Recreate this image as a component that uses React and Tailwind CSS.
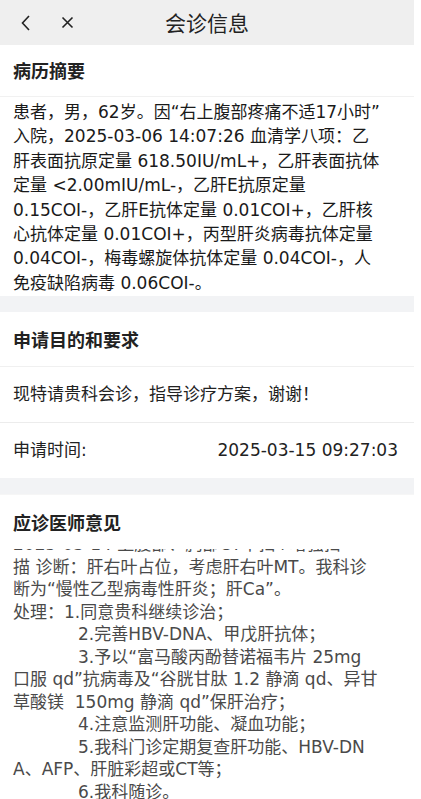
import React from 'react';

const summaryLines = [
  '患者，男，62岁。因“右上腹部疼痛不适17小时”',
  '入院，2025-03-06 14:07:26 血清学八项：乙',
  '肝表面抗原定量 618.50IU/mL+，乙肝表面抗体',
  '定量 <2.00mIU/mL-，乙肝E抗原定量',
  '0.15COI-，乙肝E抗体定量 0.01COI+，乙肝核',
  '心抗体定量 0.01COI+，丙型肝炎病毒抗体定量',
  '0.04COI-，梅毒螺旋体抗体定量 0.04COI-，人',
  '免疫缺陷病毒 0.06COI-。',
];

const opinionLines = [
  { text: '2025-03-14 上腹部、胸部CT平扫+增强扫' },
  { text: '描 诊断：肝右叶占位，考虑肝右叶MT。我科诊' },
  { text: '断为“慢性乙型病毒性肝炎；肝Ca”。' },
  { text: '处理：1.同意贵科继续诊治；' },
  { text: '2.完善HBV-DNA、甲戊肝抗体；', indent: true },
  { text: '3.予以“富马酸丙酚替诺福韦片 25mg', indent: true },
  { text: '口服 qd”抗病毒及“谷胱甘肽 1.2 静滴 qd、异甘' },
  { text: '草酸镁  150mg 静滴 qd”保肝治疗；' },
  { text: '4.注意监测肝功能、凝血功能；', indent: true },
  { text: '5.我科门诊定期复查肝功能、HBV-DN', indent: true },
  { text: 'A、AFP、肝脏彩超或CT等；' },
  { text: '6.我科随诊。', indent: true },
];

const body = { fontFamily: '"DejaVu Sans", "Noto Sans CJK SC", sans-serif' };

const SectionTitle = ({ children, className = '' }) => (
  <div className={`flex items-center px-[13px] text-[18px] font-bold text-[#222] ${className}`}>
    {children}
  </div>
);

const Gap = () => <div className="h-[16px] bg-[#f2f3f5]" />;

const App = () => {
  return (
    <div
      className="min-h-screen w-[421px] bg-white"
      style={{ fontFamily: '"Noto Sans CJK SC", "Noto Sans", sans-serif' }}
    >
      <div className="flex h-[799px] w-[414px] flex-col overflow-hidden">
        {/* top bar */}
        <div className="relative flex h-[45px] shrink-0 items-center bg-[#efefef]">
          <div className="flex items-center gap-[30px] pl-[20px]">
            <svg width="11" height="18" viewBox="0 0 11 18" fill="none" stroke="#222" strokeWidth="1.6">
              <path d="M9 2 L2.5 9 L9 16" />
            </svg>
            <svg width="13" height="13" viewBox="0 0 13 13" fill="none" stroke="#222" strokeWidth="1.6">
              <path d="M1.5 1.5 L11.5 11.5 M11.5 1.5 L1.5 11.5" />
            </svg>
          </div>
          <div className="pointer-events-none absolute inset-x-0 text-center text-[21px] text-[#222]">
            会诊信息
          </div>
        </div>

        {/* 病历摘要 */}
        <SectionTitle className="h-[52px] border-b border-[#f1f1f1]">病历摘要</SectionTitle>
        <div className="px-[13px] pt-[3px] pb-[1px] text-[17px] leading-[24.4px] text-[#1a1a1a]" style={body}>
          {summaryLines.map((line, i) => (
            <div key={i} className="whitespace-pre">{line}</div>
          ))}
        </div>

        <Gap />

        {/* 申请目的和要求 */}
        <SectionTitle className="h-[55px] border-b border-[#f0f0f0]">申请目的和要求</SectionTitle>
        <div className="flex h-[56px] items-center border-b border-[#ececec] px-[13px] text-[17px] text-[#222]" style={body}>
          现特请贵科会诊，指导诊疗方案，谢谢！
        </div>
        <div className="flex h-[55px] items-center justify-between pl-[13px] pr-[16px] text-[17px] text-[#222]" style={body}>
          <span>申请时间:</span>
          <span>2025-03-15 09:27:03</span>
        </div>

        <Gap />

        {/* 应诊医师意见 */}
        <SectionTitle className="h-[55px] shrink-0 border-t border-[#f6f6f6]">应诊医师意见</SectionTitle>
        <div className="flex-1 overflow-hidden">
          <div className="-mt-[16px] px-[13px] text-[17px] leading-[22.5px] text-[#4a4a4a]" style={body}>
            {opinionLines.map((l, i) => (
              <div key={i} className={`whitespace-pre ${l.indent ? 'pl-[65px]' : ''}`}>
                {l.text}
              </div>
            ))}
          </div>
        </div>
      </div>
    </div>
  );
};

export default App;
